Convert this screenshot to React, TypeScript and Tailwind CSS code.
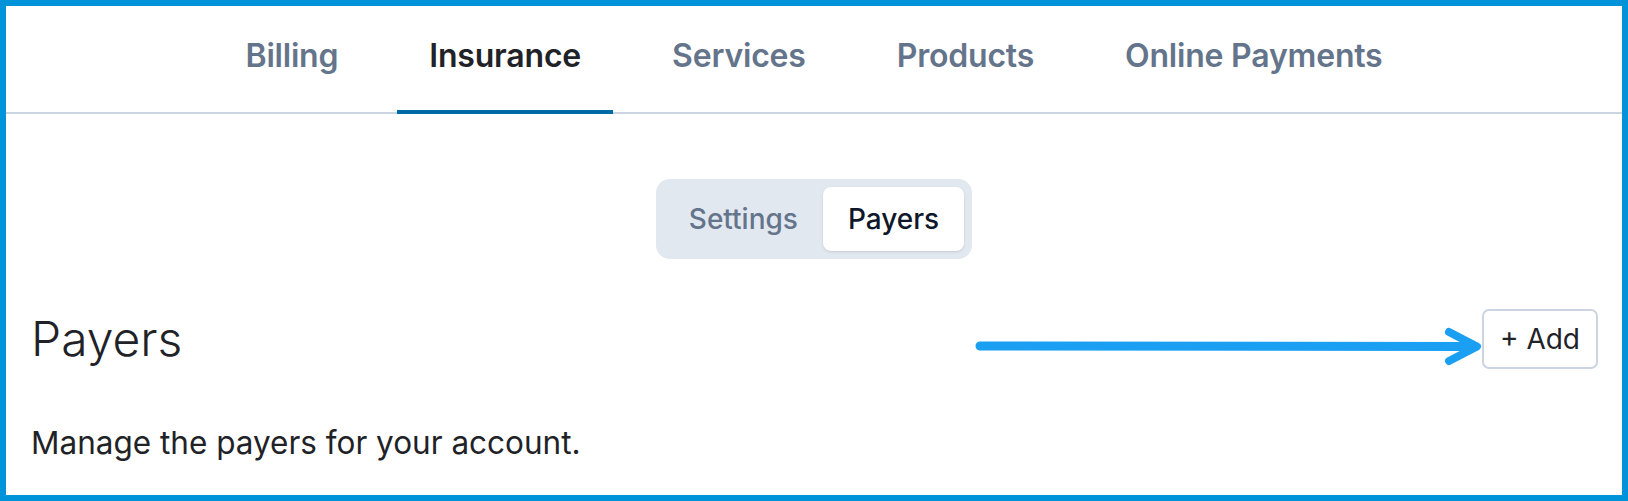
import React from 'react';

const tabs = ['Billing', 'Insurance', 'Services', 'Products', 'Online Payments'];

function Arrow() {
  return (
    <svg width="507" height="56" viewBox="0 0 507 56" className="shrink-0">
      <line x1="5" y1="35" x2="500" y2="35.5" stroke="#1a9ff2" strokeWidth="9" strokeLinecap="round" />
      <polyline points="474,21 502,35.5 474,50" fill="none" stroke="#1a9ff2" strokeWidth="8" strokeLinecap="round" strokeLinejoin="round" />
    </svg>
  );
}

export default function App() {
  return (
    <div
      className="w-[1628px] h-[501px] border-[6px] border-[#0093d9] bg-white flex flex-col overflow-hidden"
      style={{ fontFamily: 'Inter, "Noto Sans", sans-serif' }}
    >
      {/* tabs */}
      <nav className="flex justify-center gap-[27px] border-b-2 border-[#cbd5e1]">
        {tabs.map(tab => {
          const active = tab === 'Insurance';
          return (
            <div
              key={tab}
              className={`px-[32px] pt-[28px] pb-[32px] text-[32px] leading-[44px] font-semibold tracking-[-0.2px] -mb-[2px] border-b-4 ${
                active ? 'text-[#1f2328] border-[#006aa6]' : 'text-[#64748b] border-transparent'
              }`}
            >
              {tab}
            </div>
          );
        })}
      </nav>

      <div className="flex justify-center mt-[65px]">
        <div className="flex items-center bg-[#e2e8f0] rounded-[14px] p-[8px]">
          <div className="px-[25px] h-[64px] flex items-center text-[28px] font-medium text-[#64748b]">Settings</div>
          <div className="px-[25px] h-[64px] flex items-center text-[28px] font-medium text-[#0f172a] bg-white rounded-[8px] shadow-sm">
            Payers
          </div>
        </div>
      </div>

      <div className="flex items-center justify-between pl-[25px] pr-[24px] mt-[50px]">
        <h1 className="text-[48px] font-light text-[#1f2328] leading-[60px]">Payers</h1>
        <div className="flex items-center">
          <Arrow />
          <button className="h-[60px] px-[16px] border-2 border-[#cbd5e1] rounded-[7px] text-[28px] text-[#1f2328] bg-white">
            + Add
          </button>
        </div>
      </div>

      <p className="pl-[25px] mt-[50px] text-[31.5px] text-[#1f2328]">Manage the payers for your account.</p>
    </div>
  );
}
